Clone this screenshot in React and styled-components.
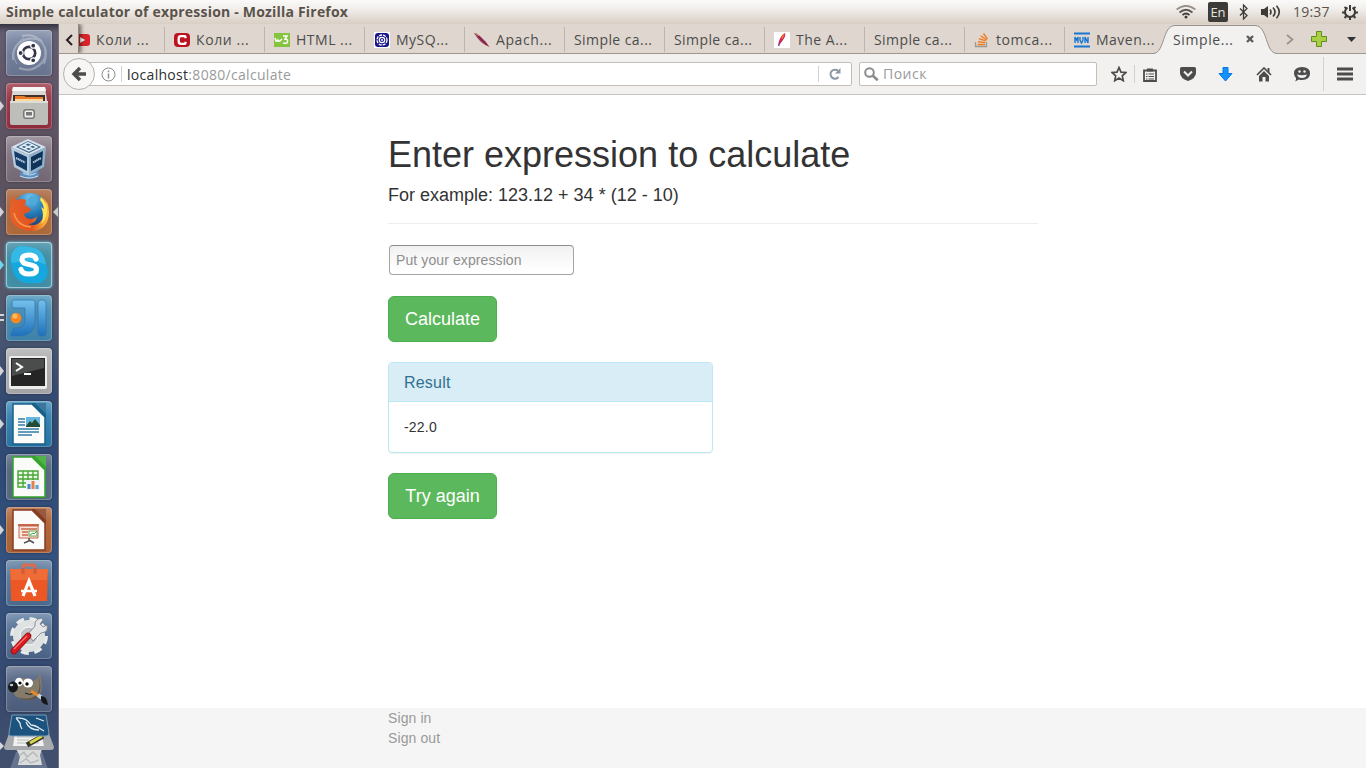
import React from "react";
import styled, { createGlobalStyle } from "styled-components";

const ui = `"Open Sans", "Noto Sans", sans-serif`;

const Global = createGlobalStyle`
  *, *::before, *::after { box-sizing: border-box; }
  body { margin: 0; background: #fff; }
  h1, h2, h3, p { margin: 0; font-weight: 400; }
  button { border: 0; padding: 0; background: none; font: inherit; color: inherit; letter-spacing: inherit; }
  svg { display: block; flex: none; }
`;

const Desktop = styled.div`
  width: 1366px;
  height: 768px;
  overflow: hidden;
  display: flex;
  flex-direction: column;
`;

/* ---------- top panel ---------- */
const Panel = styled.header`
  height: 24px;
  flex: none;
  display: flex;
  align-items: center;
  justify-content: space-between;
  padding: 0 8px 0 6px;
  background: linear-gradient(#fbfaf9 0, #f2efec 35%, #d8cec4 100%);
  font-family: ${ui};
  color: #5b534b;
`;
const WindowTitle = styled.div`
  font-size: 14px;
  line-height: 24px;
  font-weight: 700;
  letter-spacing: 0.2px;
  white-space: nowrap;
`;
const Indicators = styled.div`
  display: flex;
  align-items: center;
  height: 24px;
`;
const Lang = styled.span`
  width: 20px;
  height: 20px;
  margin: 0 11px 0 12px;
  border-radius: 2px;
  background: #3c3b37;
  color: #e8e4df;
  font-size: 13px;
  line-height: 20px;
  text-align: center;
`;
const Clock = styled.span`
  margin: 0 12px 0 12px;
  width: 37px;
  font-size: 14px;
  line-height: 22px;
  letter-spacing: 0.2px;
  white-space: nowrap;
`;

/* ---------- launcher ---------- */
const Workspace = styled.div`
  flex: 1;
  min-height: 0;
  display: flex;
`;
const Launcher = styled.nav`
  width: 59px;
  flex: none;
  display: flex;
  flex-direction: column;
  gap: 7px;
  padding-top: 6px;
  overflow: hidden;
  background: linear-gradient(#343340 0, #625e70 8px, #625669 60px, #5b515e 140px, #5d5763 230px, #4c5870 300px, #354a70 370px, #2f4a76 450px, #35547f 560px, #36486e 660px, #42506d 744px);
  border-right: 1px solid #77727e;
`;
const Tile = styled.div`
  position: relative;
  width: 46px;
  height: 46px;
  margin-left: 6px;
  flex: none;
  border-radius: 4px;
  background: ${(p) => p.$bg};
  box-shadow: inset 0 0 0 1px rgba(255, 255, 255, ${(p) => (p.$glow ? 0.5 : 0.22)}),
    inset 0 10px 14px -6px rgba(255, 255, 255, 0.28), 0 0 3px ${(p) => (p.$glow ? "#53d5f3" : "rgba(0,0,0,.35)")};
`;
const Running = styled.i`
  position: absolute;
  top: 18px;
  ${(p) => (p.$right ? "left: 47px; border-right: 5px solid #ccc;" : `left: -6px; border-left: 4px solid ${p.$color || "#d4d4d8"};`)}
  border-top: 5px solid transparent;
  border-bottom: 5px solid transparent;
`;
const RunningTwice = styled.i`
  position: absolute;
  top: 19px;
  left: -6px;
  width: 4px;
  height: 7px;
  border-top: 2px solid #d4d4d8;
  border-bottom: 2px solid #d4d4d8;
`;
const Stack = styled.div`
  height: 55px;
  margin-top: -5px;
`;

/* ---------- browser chrome ---------- */
const Browser = styled.main`
  flex: 1;
  min-width: 0;
  display: flex;
  flex-direction: column;
  font-family: ${ui};
  color: #4c4c4c;
`;
const TabBar = styled.div`
  height: 30px;
  flex: none;
  display: flex;
  background: #dfd7cf;
  border-bottom: 1px solid #9d9791;
  position: relative;
`;
const ScrollTabs = styled.button`
  width: 20px;
  display: flex;
  align-items: center;
  justify-content: center;
  padding-top: 2px;
  border-right: 1px solid #8f8984;
  box-shadow: 2px 0 4px rgba(0, 0, 0, 0.55);
  clip-path: inset(0 -7px 0 0);
  position: relative;
  z-index: 2;
`;
const Tabs = styled.div`
  width: 1085px;
  display: flex;
  overflow: hidden;
`;
const Tab = styled.div`
  width: 100px;
  flex: none;
  display: flex;
  align-items: center;
  gap: 6px;
  padding: 2px 0 0 9px;
  border-left: 1px solid transparent;
  border-image: linear-gradient(transparent 4px, #bcb5af 4px, #bcb5af 27px, transparent 27px) 1;
  &:first-child {
    margin-left: -15px;
  }
`;
const TabLabel = styled.span`
  font-size: 14px;
  line-height: 20px;
  letter-spacing: ${(p) => p.$track || 0.5}px;
  white-space: nowrap;
`;
const ActiveTab = styled.div`
  position: absolute;
  left: 1094px;
  top: 0;
  width: 126px;
  height: 30px;
`;
const ActiveRow = styled.div`
  position: absolute;
  inset: 1px 0 0 20px;
  display: flex;
  align-items: center;
`;
const CloseTab = styled.button`
  position: absolute;
  left: 93px;
  top: 11px;
`;
const TabTools = styled.div`
  margin-left: auto;
  display: flex;
  align-items: center;
  gap: 17px;
  padding: 1px 10px 0 0;
  & > :last-child {
    margin-left: 3px;
  }
`;
const NavBar = styled.div`
  height: 41px;
  flex: none;
  display: flex;
  align-items: center;
  padding-left: 4px;
  background: #f2f1f0;
  border-bottom: 1px solid #c6c4c1;
`;
const Back = styled.button`
  width: 32px;
  height: 32px;
  flex: none;
  border: 1px solid #b5b2ae;
  border-radius: 50%;
  background: #f7f6f5;
  display: flex;
  align-items: center;
  justify-content: center;
  z-index: 1;
`;
const Field = styled.div`
  height: 24px;
  width: ${(p) => p.$w}px;
  flex: none;
  margin-left: ${(p) => p.$ml}px;
  padding-left: ${(p) => p.$pl}px;
  border: 1px solid #c2bfbb;
  border-radius: 2px;
  background: #fff;
  display: flex;
  align-items: center;
  gap: ${(p) => p.$gap || 0}px;
  font-size: 14px;
  color: #9a9a9a;
  white-space: nowrap;
`;
const Split = styled.i`
  width: 1px;
  height: ${(p) => p.$h || 16}px;
  background: #d3d1ce;
  margin: 0 ${(p) => p.$mr || 0}px 0 ${(p) => p.$ml || 0}px;
`;
const Address = styled.span`
  width: 164px;
  letter-spacing: 0.3px;
  b {
    font-weight: 400;
    color: #303030;
  }
`;
const Tools = styled.div`
  display: flex;
  align-items: center;
  margin-left: 14px;
`;

/* ---------- page ---------- */
const Page = styled.section`
  flex: 1;
  min-height: 0;
  display: flex;
  flex-direction: column;
  justify-content: space-between;
  background: #fff;
  color: #333;
  font-family: "Liberation Sans", Arial, sans-serif;
  font-size: 14px;
  line-height: 20px;
`;
const Container = styled.div`
  width: 650px;
  margin-left: 329px;
`;
const PageHeader = styled.div`
  padding: 40px 0 18px;
  margin-bottom: 20px;
  border-bottom: 1px solid #eee;
`;
const Heading = styled.h1`
  font-size: 36px;
  line-height: 40px;
  margin-bottom: 10px;
`;
const Example = styled.p`
  font-size: 18px;
  line-height: 20px;
`;
const ExpressionInput = styled.input`
  display: block;
  width: 185px;
  height: 30px;
  margin: 21px 0 21px 1px;
  padding: 0 6px;
  border: 1px solid #a5a5a5;
  border-top-color: #8c8c8c;
  border-radius: 4px;
  background: linear-gradient(#f1f1f1, #fff 90%);
  font: 14px "Liberation Sans", Arial, sans-serif;
  letter-spacing: 0.1px;
  &::placeholder {
    color: #8e8e8e;
    opacity: 1;
  }
`;
const Action = styled.button`
  display: block;
  width: 109px;
  height: 46px;
  border: 1px solid #4cae4c;
  border-radius: 6px;
  background: #5cb85c;
  color: #fff;
  font-size: 18px;
  line-height: 24px;
`;
const ResultPanel = styled.div`
  width: 325px;
  margin: 20px 0;
  border: 1px solid #bce8f1;
  border-radius: 4px;
  box-shadow: 0 1px 1px rgba(0, 0, 0, 0.05);
`;
const ResultTitle = styled.h3`
  height: 39px;
  padding: 11px 15px 9px;
  border-bottom: 1px solid #bce8f1;
  border-radius: 3px 3px 0 0;
  background: #d9edf7;
  color: #31708f;
  font-size: 16px;
  line-height: 18px;
  letter-spacing: 0.2px;
`;
const ResultBody = styled.div`
  padding: 15px;
  letter-spacing: 0.2px;
`;
const Footer = styled.footer`
  height: 60px;
  background: #f5f5f5;
`;
const FooterLink = styled.a`
  display: block;
  color: #999;
  letter-spacing: 0.1px;
`;

/* ---------- launcher drawings ---------- */
const Art = ({ children }) => (
  <svg width="46" height="46" viewBox="0 0 46 46">{children}</svg>
);

const DashArt = () => (
  <Art>
    <g fill="none" stroke="#fff" opacity=".3">
      <path d="M7 30C5 14 20 4 36 11" strokeWidth="2" />
      <path d="M16 6C34 2 44 18 38 34" strokeWidth="2" />
      <path d="M39 17C43 32 28 44 13 38" strokeWidth="2" />
      <path d="M11 34C4 24 10 12 18 8" />
    </g>
    <circle cx="23" cy="23" r="12" fill="#fff" />
    <circle cx="23" cy="23" r="6.2" fill="none" stroke="#34374b" strokeWidth="2.700" />
    <g fill="#34374b" stroke="#fff" strokeWidth="1.200">
      <circle cx="14.600" cy="23" r="2.500" />
      <circle cx="27.200" cy="15.700" r="2.500" />
      <circle cx="27.200" cy="30.300" r="2.500" />
    </g>
  </Art>
);
const FilesArt = () => (
  <Art>
    <path d="M7 4h32l2 14H5z" fill="#d8d8d5" />
    <path d="M7 4h32l1 4H6z" fill="#f7f7f5" />
    <path d="M7 12h32v8H7z" fill="#443026" />
    <path d="M9 13h9l2 1h17v6H9z" fill="#e87c28" />
    <path d="M9 16h28v2H9z" fill="#ffd79a" />
    <path d="M4 18h38v22q0 2-2 2H6q-2 0-2-2z" fill="#bdbdb9" />
    <path d="M4 18h38v2H4z" fill="#dcdcd8" />
    <rect x="17" y="26" width="12" height="10" rx="3" fill="#777" />
    <rect x="18.500" y="27.500" width="9" height="7" rx="1.500" fill="#ededeb" />
    <rect x="20" y="29" width="6" height="3.500" fill="#777" />
  </Art>
);
const BoxArt = () => (
  <Art>
    <path d="M15 34h17l1 6q-9 6-19 0z" fill="#5f8fc1" />
    <path d="M17 37q7 4 13 0M14 40q9 4 18 0" stroke="#c6def1" fill="none" />
    <path d="M22 3l18 8-17 8L5 11z" fill="#d6e2ec" />
    <path d="M5 11l18 8v20L8 31z" fill="#b5cbdd" />
    <path d="M40 11l-17 8v20l15-8z" fill="#8fb2cc" />
    <path d="M22 5l13 6-12 6-13-6z" fill="#3b6388" />
    <path d="M14 11l8-4.500 9 4.500-8 4zM18 9l9 4M27 8.500l-9 4.500" fill="none" stroke="#e2ecf4" strokeWidth="1.500" />
    <path d="M8 15l13 6v14L10 29z" fill="#133b68" />
    <path d="M37 15l-12 6v14l11-6z" fill="#103257" />
    <path d="M10 22l9 4.500M27 26.500l8-4.500" stroke="#b7cee2" strokeWidth="2" strokeDasharray="1.500 .4" />
  </Art>
);
const FirefoxArt = () => (
  <Art>
    <defs>
      <radialGradient id="globe" cx=".5" cy=".15" r=".9"><stop stopColor="#71c6ee" /><stop offset=".5" stopColor="#267cb8" /><stop offset="1" stopColor="#15366e" /></radialGradient>
      <linearGradient id="fox" x1="0" x2="1"><stop stopColor="#e8602a" /><stop offset=".55" stopColor="#e2531f" /><stop offset="1" stopColor="#ffc83d" /></linearGradient>
    </defs>
    <circle cx="24" cy="21" r="17" fill="url(#globe)" />
    <path d="M25 7q5 0 7 4l-3 5-5-1-3-4z" fill="#4faada" />
    <path d="M6 7q2 3 5 4 5-2 9 0l-1 5 6 4-2 3-5 2q1 5 7 5 4 0 6-3-1 8-9 8 8 3 13-3 6-6 2-18l3 2q-1-6-5-8 8 3 8 16-1 18-19 18Q4 40 4 23q0-9 2-16z" fill="url(#fox)" />
    <path d="M35 8q7 6 6 15-1 8-6 12 4-9 0-17l3 2q-1-6-4-9z" fill="#ffe257" />
    <path d="M8 24q3 13 17 14" fill="none" stroke="#ff9b48" strokeWidth="1.400" />
  </Art>
);
const SkypeArt = () => (
  <Art>
    <path d="M15 4q4 0 7 1 16 0 18 18 3 5 1 11-4 9-14 7Q9 43 6 25 3 18 6 11 9 5 15 4z" fill="#14a8df" />
    <path d="M15 4q4 0 7 1 16 0 18 18-12-7-34-2-2-5 0-10Q9 5 15 4z" fill="#54c9ee" opacity=".5" />
    <path d="M30 17q-1-4-7-4-7 0-7 4.500 0 4 7 5 7.500 1 7.500 5 0 4.500-7.500 4.500-7 0-8-4.500" fill="none" stroke="#fff" strokeWidth="5.200" strokeLinecap="round" />
  </Art>
);
const IdeaArt = () => (
  <Art>
    <defs><linearGradient id="ji" x2="0" y2="1"><stop stopColor="#75c0ea" /><stop offset="1" stopColor="#1f70ba" /></linearGradient></defs>
    <path d="M8 5h19q2 0 2 2v18q0 16-16 16H6q-2 0-1-2l2-5q1-1 3-1 9 0 9-8V13H8q-2 0-2-2V7q0-2 2-2zM35 5h2q3 0 3 3v30q0 3-3 3h-2q-3 0-3-3V8q0-3 3-3z" fill="url(#ji)" stroke="#2874b5" strokeWidth=".7" />
    <circle cx="10" cy="23" r="5.300" fill="#ff861b" />
    <circle cx="9" cy="21" r="2.500" fill="#ffbc60" />
  </Art>
);
const TerminalArt = () => (
  <Art>
    <rect x="3" y="8" width="38" height="33" rx="2" fill="#ececea" />
    <rect x="5" y="10" width="34" height="28" fill="#242524" />
    <path d="M6 11h32v9L6 28z" fill="#4b4d4c" />
    <path d="M10 15l6 4-6 4M18 26h7" stroke="#fff" strokeWidth="2" fill="none" />
  </Art>
);
const Sheet = ({ color, children }) => (
  <Art>
    <path d="M7 3h19l13 13v27H7z" fill="#fbfbfa" stroke={color} strokeWidth="1.500" />
    <path d="M25 2h15v15z" fill={color} />
    <path d="M29 2h11v11z" fill="#fff" opacity=".15" />
    {children}
  </Art>
);
const WriterArt = () => (
  <Sheet color="#17608c">
    <path d="M12 18h7M12 21h7M12 24h7M12 28h21M12 31h21M12 34h14" stroke="#337ea9" strokeWidth="1.600" />
    <path d="M20 16h14v10H20z" fill="#65b6dd" />
    <path d="M20 25l4-5 2 2 3-4 5 6v2H20z" fill="#244c35" />
  </Sheet>
);
const CalcArt = () => (
  <Sheet color="#32a52a">
    <path d="M12 17h20v16H12zM12 21h20M12 25h20M12 29h20M17 17v16M22 17v16M27 17v16" fill="#eef8e9" stroke="#48a536" strokeWidth="1.400" />
    <path d="M20 26h14v10H20z" fill="#eef1f6" />
    <path d="M23 35v-5" stroke="#438bcf" strokeWidth="3" />
    <path d="M27 35v-8" stroke="#e58048" strokeWidth="3" />
    <path d="M31 35v-4" stroke="#57a2d8" strokeWidth="3" />
  </Sheet>
);
const ImpressArt = () => (
  <Sheet color="#873d22">
    <path d="M12 17h21v2H12z" fill="#c8674a" />
    <path d="M13 19h19v12H13z" fill="#f8e7dd" stroke="#c8674a" />
    <path d="M23 31v3l-5 2M23 33l5 3" fill="none" stroke="#555" strokeWidth="1.500" />
    <path d="M15 22h16M16 25h6M16 28h6" stroke="#c76a4c" strokeWidth="1.400" />
    <rect x="23" y="24" width="8" height="5" fill="#fff" stroke="#67a354" />
    <path d="M24 28l3-2 1 1 3-3" fill="none" stroke="#3d9e4c" />
  </Sheet>
);
const SoftwareArt = () => (
  <Art>
    <path d="M17 14V6q0-1 2-1h8q2 0 2 2v7" fill="none" stroke="#db6b4e" strokeWidth="3" />
    <path d="M4 9h38l-1 32H5z" fill="#eb5725" />
    <path d="M4 9h38l-1 11H5z" fill="#f27a44" opacity=".6" />
    <path d="M17 8v6M29 8v6" stroke="#cf5b3c" strokeWidth="3" />
    <path d="M17 36l6-15 6 15" fill="none" stroke="#fff" strokeWidth="3.200" />
    <path d="M15 31h16" stroke="#fff" strokeWidth="2.500" />
  </Art>
);
const SettingsArt = () => (
  <Art>
    <circle cx="23" cy="23" r="16.500" fill="none" stroke="#e9ebea" strokeWidth="5" strokeDasharray="7.600 5.360" />
    <circle cx="23" cy="23" r="11.500" fill="none" stroke="#dfe2e2" strokeWidth="9" />
    <circle cx="23" cy="23" r="9" fill="#c0c4c7" stroke="#fafafa" />
    <path d="M22 21l7-8q-1-7 7-8l1 2-3 4 3 3 4-2q2 7-6 8l-8 8z" fill="#e4e5e6" stroke="#777a80" strokeWidth=".8" />
    <path d="M8 38l14-15" stroke="#8d1014" strokeWidth="6.500" strokeLinecap="round" />
    <path d="M8 38l14-15" stroke="#d91a20" strokeWidth="5" strokeLinecap="round" />
    <path d="M8 36l13-13" stroke="#ff7770" strokeWidth="1.200" />
  </Art>
);
const GimpArt = () => (
  <Art>
    <path d="M9 18Q14 8 24 15 32 15 34 7q4 17-1 23-6 5-15 4Q6 31 7 23z" fill="#857b6b" />
    <path d="M33 10q2 15-3 19-7 6-18 2 6 5 17 2 8-4 4-23z" fill="#5e564b" />
    <ellipse cx="13" cy="16" rx="4" ry="4.300" fill="#fff" />
    <ellipse cx="22" cy="17" rx="5" ry="4.500" fill="#fff" />
    <circle cx="14" cy="17" r="1.600" /><circle cx="21" cy="18" r="1.700" />
    <ellipse cx="7" cy="21" rx="5" ry="5.400" fill="#151719" /><ellipse cx="5.500" cy="19" rx="1.800" ry="1.200" fill="#bec5ca" />
    <path d="M19 27q5 3 9 0" stroke="#211f1c" fill="none" />
    <path d="M25 25l8 5" stroke="#e28b27" strokeWidth="3" />
    <path d="M32 29l4 3" stroke="#c8d0d6" strokeWidth="4" />
    <path d="M35 30q6 0 7 9-7-1-7-6z" fill="#161719" />
  </Art>
);
const FoldedArt = () => (
  <svg width="58" height="55" viewBox="0 0 58 55">
    <path d="M16 38h26l6 17H10z" fill="#66738e" />
    <path d="M16 35h26l-2 6 2 10H18l2-9z" fill="#dadddc" />
    <path d="M19 42l5-4 3 5 6-5 5 5M20 49l6-4 5 4 8-3" stroke="#b5babb" fill="none" strokeWidth="1.500" />
    <path d="M10 17h38l6 16q0 3-3 3H7q-3 0-3-3z" fill="#a7aaaf" />
    <path d="M15 18h26l3 14H13z" fill="#f0f0ee" />
    <path d="M17 23h17M17 26h12M17 29h22" stroke="#babdbb" />
    <path d="M27 31l16-9" stroke="#35362a" strokeWidth="5" />
    <path d="M30 29l12-7" stroke="#d9d546" strokeWidth="3" />
    <path d="M12 1h34l3 18q0 3-3 3H11q-3 0-2-3z" fill="#1b527e" stroke="#799bb4" />
    <path d="M16 4q10-1 15 7 6 1 8 3l5 3M16 4l4 5q0 3 2 6M36 4l8 3M26 8q3 8 13 8" stroke="#dfebf0" strokeWidth="1.300" fill="none" />
    <path d="M0 28l4 4-4 4z" fill="#d8d8dc" />
  </svg>
);

const apps = [
  { Icon: DashArt, bg: "linear-gradient(#7f8ca8, #68738e)" },
  { Icon: FilesArt, bg: "linear-gradient(#9c3b4a, #8e2b3b)", left: 1 },
  { Icon: BoxArt, bg: "linear-gradient(#8d818d, #716673)" },
  { Icon: FirefoxArt, bg: "linear-gradient(#a8663f, #ae693a)", left: 1, right: 1 },
  { Icon: SkypeArt, bg: "#408da4", left: "#6fd5ee", glow: 1 },
  { Icon: IdeaArt, bg: "linear-gradient(#4f96bb, #3e81a8)", twice: 1 },
  { Icon: TerminalArt, bg: "linear-gradient(#b2b2b4, #a4a4a7)", left: 1 },
  { Icon: WriterArt, bg: "linear-gradient(#418cb9, #256f9f)", left: 1 },
  { Icon: CalcArt, bg: "linear-gradient(#55677e, #54677f)" },
  { Icon: ImpressArt, bg: "linear-gradient(#b26a3e, #a75d32)", left: 1 },
  { Icon: SoftwareArt, bg: "linear-gradient(#6382a3, #49698d)" },
  { Icon: SettingsArt, bg: "linear-gradient(#6481a5, #496184)" },
  { Icon: GimpArt, bg: "linear-gradient(#61718e, #4b5b7a)" },
];

/* ---------- favicons ---------- */
const Fav = ({ children }) => <svg width="16" height="16" viewBox="0 0 16 16">{children}</svg>;
const Favicons = {
  youtube: <Fav><rect y="2" width="16" height="12" rx="3" fill="#d9252a" /><path d="M6 5l5 3-5 3z" fill="#fff" /></Fav>,
  c: <Fav><rect y="1" width="16" height="14" rx="4" fill="#bd1220" /><path d="M11.500 6.300V5q0-.8-1-.8H7Q4.700 4.200 4.700 6.500v3Q4.700 11.800 7 11.800h3.500q1 0 1-.8V9.700" fill="none" stroke="#fff" strokeWidth="2.300" /></Fav>,
  w3: <Fav><path d="M0 1h16v14H0z" fill="#86c440" /><path d="M1 6l1 3q1 1 2-1 1 2 2 1l2-2M9 4h4l-2 3q3 0 2.500 3-.5 2-4.500 1" fill="none" stroke="#fff" strokeWidth="1.500" /></Fav>,
  mysql: <Fav><path d="M0 0h16v16H0z" fill="#fff" /><rect x="1" y="1" width="14" height="14" rx="3" fill="#17168c" /><circle cx="8" cy="8" r="5" fill="none" stroke="#fff" strokeWidth="1.300" strokeDasharray="3 1" /><circle cx="8" cy="8" r="2.700" fill="none" stroke="#fff" strokeWidth="1.200" /><circle cx="8" cy="8" r="1" fill="#fff" /></Fav>,
  apache: <Fav><path d="M0 1q3 0 6 3l6 6 3.500 5q-5-2-8.500-5Q3 6 0 1z" fill="#9b3459" /><path d="M1 1l4 3" stroke="#cda063" /><path d="M4 4l9 9" stroke="#6b1c48" /></Fav>,
  feather: <Fav><path d="M0 0h16v16H0z" fill="#fff" /><path d="M11 1q1 3-2 7l-3 4-2 1 1-4q2-6 6-8z" fill="#cc2855" /><path d="M11 1L8.500 7 7 6q1.500-3.500 4-5z" fill="#ef7b28" /><path d="M4 14l2-5-.5 5z" fill="#6b3b91" /></Fav>,
  stack: <Fav><path d="M1.500 10v4.500h11V10" fill="none" stroke="#9c9894" strokeWidth="1.300" /><path d="M3.500 12.500h7.500M4 9.800l7.200.8M4.800 6.700l7 2.200M6.700 3.800l6 4.200M9.500 1.500l4 5.700" stroke="#ef7b22" strokeWidth="1.400" /></Fav>,
  maven: <Fav><path d="M0 1.500h16M0 14.500h16" stroke="#1676d2" strokeWidth="2" /><path d="M1 11V5l1.500 3L4 5v6M6 5v3l1.500 3L9 8V5M11 11V5l3 6V5" fill="none" stroke="#1676d2" strokeWidth="1.400" /></Fav>,
};
const tabs = [
  ["youtube", "Коли ...", 0.6],
  ["c", "Коли ...", 0.6],
  ["w3", "HTML ...", 0.5],
  ["mysql", "MySQ...", 0.5],
  ["apache", "Apach...", 0.6],
  [null, "Simple ca...", 0.42],
  [null, "Simple ca...", 0.42],
  ["feather", "The A...", 0.5],
  [null, "Simple ca...", 0.42],
  ["stack", "tomca...", 0.6],
  ["maven", "Maven...", 0.5],
];

const Line = ({ w, h, d, sw = 2, color = "#4c4c4c", fill = "none" }) => (
  <svg width={w} height={h} viewBox={`0 0 ${w} ${h}`}>
    <path d={d} fill={fill} stroke={color} strokeWidth={sw} />
  </svg>
);
const Gap = styled.span`
  margin-left: ${(p) => p.$w}px;
`;

export default function App() {
  return (
    <>
      <Global />
      <Desktop>
        <Panel>
          <WindowTitle>Simple calculator of expression - Mozilla Firefox</WindowTitle>
          <Indicators>
            <svg width="20" height="14" viewBox="0 0 20 14" fill="none" strokeWidth="1.700">
              <path d="M.6 4.500Q10-3 19.400 4.500" stroke="#98918a" /><path d="M3.500 7.500Q10 2 16.500 7.500" stroke="#5c554e" /><path d="M6.500 10Q10 7 13.500 10" stroke="#3c3b37" /><circle cx="10" cy="12" r="1.500" fill="#3c3b37" />
            </svg>
            <Lang>En</Lang>
            <Line w={10} h={16} sw={1.3} color="#3c3b37" d="M1 4.500l7 7-3.500 3.500V1L8 4.500l-7 7" />
            <Gap $w={12}>
              <svg width="20" height="14" viewBox="0 0 20 14" fill="none" stroke="#3c3b37" strokeWidth="1.600">
                <path d="M0 4h3l4-3v12l-4-3H0z" fill="#3c3b37" stroke="none" /><path d="M9 4.500q2 2.500 0 5M12 2.500q4 4.500 0 9M15.500.8q5.500 6.200 0 12.400" />
              </svg>
            </Gap>
            <Clock>19:37</Clock>
            <svg width="16" height="16" viewBox="0 0 16 16" fill="none" stroke="#3c3b37" strokeWidth="2">
              <path d="M5.500 3.700a5 5 0 1 0 5 0M8 1v6" /><path d="M2.500 3l2 1.500M13.500 3l-2 1.500M0 8.500h3M13 8.500h3M2.500 14l2-2M13.500 14l-2-2M8 13v3" />
            </svg>
          </Indicators>
        </Panel>
        <Workspace>
          <Launcher>
            {apps.map(({ Icon, bg, left, right, twice, glow }, i) => (
              <Tile key={i} $bg={bg} $glow={glow}>
                <Icon />
                {left && <Running $color={left === 1 ? undefined : left} />}
                {right && <Running $right />}
                {twice && <RunningTwice />}
              </Tile>
            ))}
            <Stack><FoldedArt /></Stack>
          </Launcher>
          <Browser>
            <TabBar>
              <ScrollTabs><Line w={8} h={12} sw={2} color="#222" d="M7 1L2 6l5 5" /></ScrollTabs>
              <Tabs>
                {tabs.map(([icon, label, track], i) => (
                  <Tab key={i}>
                    {icon && Favicons[icon]}
                    <TabLabel $track={track}>{label}</TabLabel>
                  </Tab>
                ))}
              </Tabs>
              <ActiveTab>
                <svg width="126" height="31" viewBox="0 0 126 31">
                  <path d="M0 29.500C12 29.500 9 1.500 22 1.500H102C115 1.500 112 29.500 124 29.500V31H0z" fill="#f2f1f0" />
                  <path d="M0 29.500C12 29.500 9 1.500 22 1.500H102C115 1.500 112 29.500 124 29.500" fill="none" stroke="#97918b" />
                </svg>
                <ActiveRow><TabLabel $track={0.6}>Simple...</TabLabel></ActiveRow>
                <CloseTab><Line w={8} h={8} sw={2.4} color="#5b5b59" d="M1 1l6 6M7 1L1 7" /></CloseTab>
              </ActiveTab>
              <TabTools>
                <Line w={8} h={11} sw={1.7} color="#99938d" d="M1 1l5.500 4.500L1 10" />
                <Line w={16} h={16} sw={1} color="#5f8f18" fill="#a8cf45" d="M5.500.5h5v5h5v5h-5v5h-5v-5h-5v-5h5z" />
                <Line w={9} h={5} sw={0} fill="#333" d="M0 0h9L4.500 5z" />
              </TabTools>
            </TabBar>
            <NavBar>
              <Back><Line w={16} h={16} sw={3.4} d="M15 8H3M9 2L3 8l6 6" /></Back>
              <Field $w={769} $ml={-12} $pl={17}>
                <svg width="15" height="15" viewBox="0 0 15 15"><circle cx="7.500" cy="7.500" r="6.500" fill="none" stroke="#8d8d8d" /><path d="M7.500 6.500v5M7.500 3.500v1.700" stroke="#8d8d8d" strokeWidth="1.500" /></svg>
                <Split $ml={5} $mr={5} />
                <Address><b>localhost</b>:8080/calculate</Address>
                <Split $ml={527} $mr={10} />
                <svg width="12" height="12" viewBox="0 0 12 12"><path d="M9.500 9A4.500 4.500 0 1 1 9 2.800" fill="none" stroke="#8b98a5" strokeWidth="2" /><path d="M11.500 0v5.500H6z" fill="#8b98a5" /></svg>
              </Field>
              <Field $w={238} $ml={7} $pl={4} $gap={4}>
                <svg width="15" height="15" viewBox="0 0 15 15" fill="none" stroke="#8b8b8b"><circle cx="5.500" cy="5.500" r="4.300" strokeWidth="2" /><path d="M8.800 8.800l5 4.500" strokeWidth="2.600" /></svg>
                <TabLabel>Поиск</TabLabel>
              </Field>
              <Tools>
                <Line w={16} h={16} sw={1.7} d="M8 1.500l2 4.600 5 .4-3.700 3.300 1 4.900L8 12l-4.300 2.700 1-4.900L1 6.500l5-.4z" />
                <Split $ml={7} $mr={8} $h={18} />
                <svg width="14" height="15" viewBox="0 0 14 15"><path d="M1 3.500h12V14H1z" fill="none" stroke="#4c4c4c" strokeWidth="1.800" /><path d="M3 7h1.500M5.500 7H11M3 9.500h1.500M5.500 9.500H11M3 12h1.500M5.500 12H11" stroke="#4c4c4c" strokeWidth="1.200" /><path d="M4 1.500h6v3H4z" fill="#4c4c4c" /></svg>
                <Gap $w={23}><svg width="16" height="14" viewBox="0 0 16 14"><path d="M1.500 0h13Q16 0 16 1.500V6q0 5-8 8Q0 11 0 6V1.500Q0 0 1.500 0z" fill="#4c4c4c" /><path d="M4 4.500l4 4 4-4" stroke="#f2f1f0" strokeWidth="2" fill="none" /></svg></Gap>
                <Gap $w={22}><Line w={15} h={15} sw={1} color="#0876df" fill="#1492ff" d="M5 .5h5v6h4l-6.500 7.500L1 6.500h4z" /></Gap>
                <Gap $w={23}><svg width="16" height="15" viewBox="0 0 16 15"><path d="M1 8l7-7 7 7" fill="none" stroke="#4c4c4c" strokeWidth="1.700" /><path d="M11.500 1h2v5l-2-2zM3 9l5-5 5 5v5.500H9.500V10h-3v4.500H3z" fill="#4c4c4c" /></svg></Gap>
                <Gap $w={21}><svg width="17" height="15" viewBox="0 0 17 15"><path d="M9 0q8 0 8 6.500T9 13q-2 0-3-.5L2 14.500q1.500-2 1-3.500-2-2-2-4.500Q1 0 9 0z" fill="#4c4c4c" /><circle cx="6.500" cy="4.500" r="1.200" fill="#f2f1f0" /><circle cx="11.500" cy="4.500" r="1.200" fill="#f2f1f0" /><path d="M4 7.500q5 1.500 10 0-1 3.500-5 3.500T4 7.500z" fill="#f2f1f0" /></svg></Gap>
                <Split $ml={13} $mr={13} $h={34} />
                <Line w={16} h={14} sw={3} d="M0 2h16M0 7h16M0 12h16" />
              </Tools>
            </NavBar>
            <Page>
              <Container>
                <PageHeader>
                  <Heading>Enter expression to calculate</Heading>
                  <Example>For example: 123.12 + 34 * (12 - 10)</Example>
                </PageHeader>
                <ExpressionInput placeholder="Put your expression" />
                <Action>Calculate</Action>
                <ResultPanel>
                  <ResultTitle>Result</ResultTitle>
                  <ResultBody>-22.0</ResultBody>
                </ResultPanel>
                <Action>Try again</Action>
              </Container>
              <Footer>
                <Container>
                  <FooterLink>Sign in</FooterLink>
                  <FooterLink>Sign out</FooterLink>
                </Container>
              </Footer>
            </Page>
          </Browser>
        </Workspace>
      </Desktop>
    </>
  );
}
